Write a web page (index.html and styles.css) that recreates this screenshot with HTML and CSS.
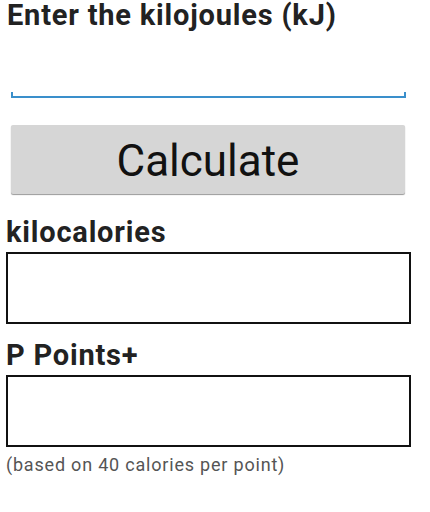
FILE: index.html
```html
<!DOCTYPE html>
<html lang="en">

<head>
    <meta charset="UTF-8">
    <meta name="viewport" content="width=device-width, initial-scale=1.0">
    <title>kJ to Calories</title>
    <link rel="stylesheet" href="styles.css">
</head>

<body>
    <div class="screen">
        <h2 class="title">Enter the kilojoules (kJ)</h2>
        <div class="field">
            <input type="number" id="kj" class="kj-input">
            <div class="field-line"></div>
        </div>

        <button class="calc-btn" onclick="calculate()">Calculate</button>

        <div class="label label-kcal">kilocalories</div>
        <div class="result-box" id="kcal"></div>

        <div class="label label-points">P Points+</div>
        <div class="result-box" id="points"></div>
        <p class="note">(based on 40 calories per point)</p>
    </div>
    <script>
        function calculate() {
            let kj = parseFloat(document.getElementById('kj').value);
            if (isNaN(kj)) {
                return;
            }
            let kcal = kj / 4.184;
            document.getElementById('kcal').textContent = kcal.toFixed(1);
            document.getElementById('points').textContent = (kcal / 40).toFixed(1);
        }
    </script>
</body>
</html>
```

FILE: styles.css
```css
body {
    margin: 0;
    background-color: #ffffff;
    font-family: Roboto, "Liberation Sans", Arial, sans-serif;
    color: #222222;
}

.screen {
    width: 430px;
    height: 512px;
    overflow: hidden;
}

.title {
    margin: 0 0 0 7px;
    padding-top: 1px;
    font-size: 29px;
    line-height: 28px;
    letter-spacing: 0.8px;
    font-weight: bold;
}

.field {
    margin: 0 24px 0 11px;
}

.kj-input {
    display: block;
    width: 100%;
    height: 63px;
    margin: 0;
    padding: 0 6px;
    box-sizing: border-box;
    border: none;
    outline: none;
    background: transparent;
    font-family: inherit;
    font-size: 24px;
}

.field-line {
    height: 4px;
    border: 2px solid #3a8fcb;
    border-top: none;
}

.calc-btn {
    display: block;
    width: 394px;
    height: 69px;
    margin: 27px 0 0 11px;
    padding: 4px 0 0 0;
    box-sizing: border-box;
    border: none;
    border-radius: 2px;
    background-color: #d6d6d6;
    box-shadow: 0 1px 1px #9a9a9a;
    font-family: inherit;
    font-size: 44px;
    line-height: 65px;
    color: #111111;
}

.label {
    margin-left: 6px;
    font-size: 29px;
    line-height: 28px;
    letter-spacing: 0.8px;
    font-weight: bold;
}

.label-kcal {
    margin-top: 24px;
}

.label-points {
    margin-top: 17px;
}

.result-box {
    width: 405px;
    height: 72px;
    margin: 6px 0 0 6px;
    box-sizing: border-box;
    border: 2px solid #111111;
}

.note {
    margin: 7px 0 0 6px;
    font-size: 18px;
    line-height: 21px;
    letter-spacing: 0.8px;
    color: #555555;
}
```
